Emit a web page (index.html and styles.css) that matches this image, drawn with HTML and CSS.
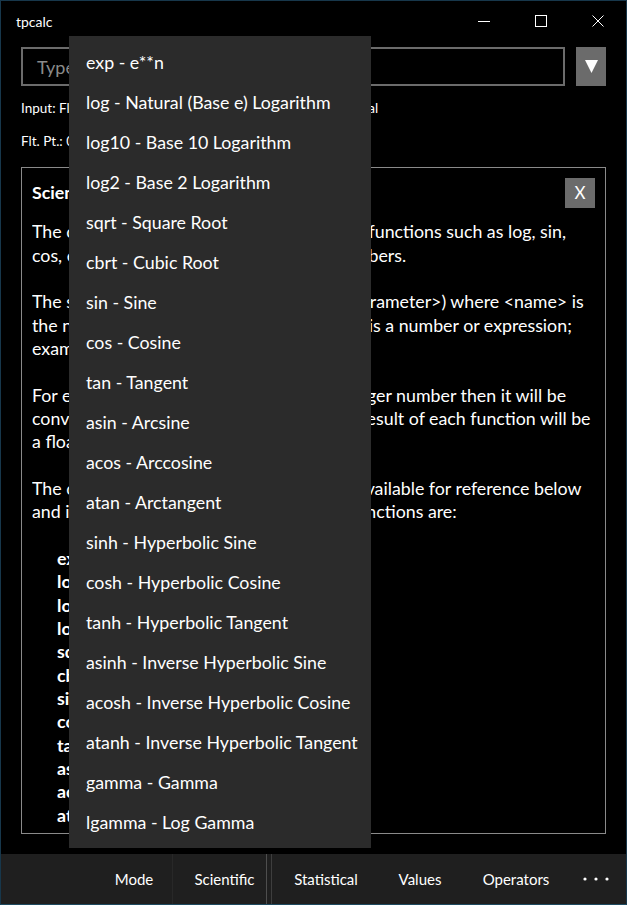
FILE: index.html
```
<!DOCTYPE html>
<html lang="en">
<head>
<meta charset="utf-8">
<title>tpcalc</title>
<link rel="stylesheet" href="styles.css">
</head>
<body>
<div class="window">
  <header class="titlebar">
    <span class="title">tpcalc</span>
    <div class="controls">
      <div class="ctl"><svg width="12" height="12" viewBox="0 0 12 12"><line x1="0" y1="6.5" x2="12" y2="6.5" stroke="#fff" stroke-width="1"/></svg></div>
      <div class="ctl"><svg width="12" height="12" viewBox="0 0 12 12"><rect x="0.5" y="0.5" width="11" height="11" fill="none" stroke="#fff" stroke-width="1"/></svg></div>
      <div class="ctl"><svg width="12" height="12" viewBox="0 0 12 12"><path d="M0.5 0.5 L11.5 11.5 M11.5 0.5 L0.5 11.5" stroke="#fff" stroke-width="1"/></svg></div>
    </div>
  </header>

  <main class="content">
    <div class="input-row">
      <div class="input">Type an expression here</div>
      <div class="drop"><svg width="13" height="13" viewBox="0 0 13 13"><polygon points="0,0 13,0 6.5,13" fill="#fff"/></svg></div>
    </div>
    <div class="info first">Input: Floating Point, Mode: Scientific, Integer Base: Decimal</div>
    <div class="info">Flt. Pt.: 0</div>

    <section class="help">
      <div class="help-head">
        <h2>Scientific Functions</h2>
        <div class="close">X</div>
      </div>
      <div class="help-body">
        <p>The calculator supports a set of basic math functions such as log, sin,<br>cos, exp, etc. that act on floating point numbers.</p>
        <p>The syntax to call a function is &lt;name&gt;(&lt;parameter&gt;) where &lt;name&gt; is<br>the name of the function and &lt;parameter&gt; is a number or expression;<br>example: sqrt(2) or sin(pi/2).</p>
        <p>For each function, if &lt;parameter&gt; is an integer number then it will be<br>converted to a floating point number. The result of each function will be<br>a floating point number.</p>
        <p>The complete list of standard functions is available for reference below<br>and in the functions menu. The available functions are:</p>
        <ul class="fnlist">
          <li><b>exp</b> - e**n</li>
          <li><b>log</b> - Natural (Base e) Logarithm</li>
          <li><b>log10</b> - Base 10 Logarithm</li>
          <li><b>log2</b> - Base 2 Logarithm</li>
          <li><b>sqrt</b> - Square Root</li>
          <li><b>cbrt</b> - Cubic Root</li>
          <li><b>sin</b> - Sine</li>
          <li><b>cos</b> - Cosine</li>
          <li><b>tan</b> - Tangent</li>
          <li><b>asin</b> - Arcsine</li>
          <li><b>acos</b> - Arccosine</li>
          <li><b>atan</b> - Arctangent</li>
          <li><b>sinh</b> - Hyperbolic Sine</li>
          <li><b>cosh</b> - Hyperbolic Cosine</li>
        </ul>
      </div>
    </section>
  </main>

  <footer class="cmdbar">
    <div class="cmd mode">Mode</div>
    <div class="cmd sci">Scientific</div>
    <div class="sep"></div>
    <div class="cmd w94">Statistical</div>
    <div class="cmd w94">Values</div>
    <div class="cmd w98">Operators</div>
    <div class="cmd more"><svg width="26" height="4" viewBox="0 0 26 4"><circle cx="2" cy="2" r="1.6" fill="#fff"/><circle cx="13" cy="2" r="1.6" fill="#fff"/><circle cx="24" cy="2" r="1.6" fill="#fff"/></svg></div>
  </footer>

  <ul class="menu">
    <li>exp - e**n</li>
    <li>log - Natural (Base e) Logarithm</li>
    <li>log10 - Base 10 Logarithm</li>
    <li>log2 - Base 2 Logarithm</li>
    <li>sqrt - Square Root</li>
    <li>cbrt - Cubic Root</li>
    <li>sin - Sine</li>
    <li>cos - Cosine</li>
    <li>tan - Tangent</li>
    <li>asin - Arcsine</li>
    <li>acos - Arccosine</li>
    <li>atan - Arctangent</li>
    <li>sinh - Hyperbolic Sine</li>
    <li>cosh - Hyperbolic Cosine</li>
    <li>tanh - Hyperbolic Tangent</li>
    <li>asinh - Inverse Hyperbolic Sine</li>
    <li>acosh - Inverse Hyperbolic Cosine</li>
    <li>atanh - Inverse Hyperbolic Tangent</li>
    <li>gamma - Gamma</li>
    <li>lgamma - Log Gamma</li>
  </ul>
</div>
</body>
</html>
```

FILE: styles.css
```
* { box-sizing: border-box; }

html, body {
  margin: 0;
  padding: 0;
  background: #000;
}

body {
  font-family: Lato, "Noto Sans", sans-serif;
  color: #fff;
}

.window {
  position: relative;
  width: 627px;
  height: 905px;
  border: 1px solid #17374b;
  border-bottom-color: #1e4a60;
  background: #000;
  display: flex;
  flex-direction: column;
  overflow: hidden;
}

/* title bar */
.titlebar {
  flex: none;
  height: 40px;
  display: flex;
  align-items: center;
}
.title {
  padding-left: 15px;
  font-size: 14px;
}
.controls {
  margin-left: auto;
  display: flex;
  height: 100%;
}
.ctl {
  width: 57px;
  display: flex;
  align-items: center;
  justify-content: center;
}

/* content */
.content {
  flex: 1;
  min-height: 0;
  display: flex;
  flex-direction: column;
  padding: 6px 20px 20px;
}
.input-row {
  flex: none;
  display: flex;
  gap: 11px;
  height: 39px;
}
.input {
  flex: 1;
  border: 2px solid #6b6b6b;
  color: #8a8a8a;
  font-size: 18px;
  padding-left: 14px;
  display: flex;
  align-items: center;
}
.drop {
  width: 30px;
  background: #6b6b6b;
  display: flex;
  align-items: center;
  justify-content: center;
}
.info {
  flex: none;
  font-size: 13.5px;
  line-height: 20px;
  margin-top: 13px;
  white-space: nowrap;
}
.info.first { margin-top: 12px; }

/* help panel */
.help {
  flex: 1;
  min-height: 0;
  margin-top: 16px;
  border: 1px solid #8a8a8a;
  padding: 10px 10px 10px;
  display: flex;
  flex-direction: column;
  font-size: 17.8px;
  line-height: 23.33px;
}
.help-head {
  flex: none;
  display: flex;
  align-items: center;
  justify-content: space-between;
  height: 30px;
  margin-bottom: 12.3px;
}
.help h2 {
  margin: 0;
  font-size: 17.8px;
  font-weight: 700;
  line-height: 23.33px;
}
.close {
  width: 30px;
  height: 30px;
  background: #6b6b6b;
  display: flex;
  align-items: center;
  justify-content: center;
  font-size: 17px;
}
.help-body {
  flex: 1;
  min-height: 0;
  overflow: hidden;
}
.help p {
  margin: 0 0 23.33px;
  white-space: nowrap;
}
.fnlist {
  list-style: none;
  margin: 0;
  padding: 0 0 0 25px;
  white-space: nowrap;
}

/* command bar */
.cmdbar {
  flex: none;
  height: 50px;
  background: #1f1f1f;
  display: flex;
  justify-content: flex-end;
  font-size: 15px;
}
.cmd {
  display: flex;
  align-items: center;
  justify-content: center;
}
.mode { width: 76px; }
.sci {
  width: 95px;
  padding-left: 10px;
  border-left: 1px solid #282828;
  border-right: 1px solid #4e4e4e;
}
.sep {
  width: 8px;
  margin-left: 4px;
  border-left: 1px solid #3e3e3e;
}
.w94 { width: 94px; }
.w98 { width: 98px; }
.more { width: 61px; }

/* overlay flyout menu */
.menu {
  position: absolute;
  left: 68px;
  top: 35px;
  width: 302px;
  height: 812px;
  margin: 0;
  padding: 6px 0 0;
  list-style: none;
  background: #2b2b2b;
  font-size: 17.8px;
}
.menu li {
  height: 40px;
  line-height: 40px;
  padding-left: 17px;
  white-space: nowrap;
}
```
